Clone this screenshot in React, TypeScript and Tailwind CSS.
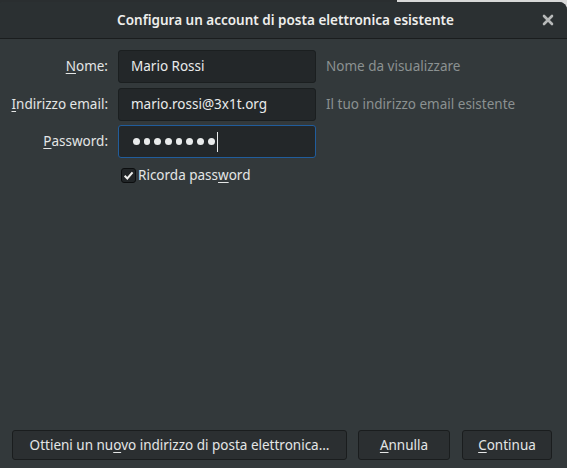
import React from "react";

const font = { fontFamily: '"Noto Sans", "Open Sans", sans-serif' };

function U({ children }: { children: React.ReactNode }) {
  return <span className="underline underline-offset-2 decoration-1">{children}</span>;
}

function Field({ label, value, hint, focused }: { label: React.ReactNode; value: React.ReactNode; hint?: string; focused?: boolean }) {
  return (
    <div className="flex items-center h-[33px] whitespace-nowrap">
      <div className="w-[118px] shrink-0 text-right pr-[10px] text-[#e4e6e6] text-[13.5px]">{label}</div>
      <div
        className={
          "w-[198px] shrink-0 h-full rounded-[3px] bg-[#232729] flex items-center pl-[12px] text-[13.5px] text-[#e9ebeb] border " +
          (focused ? "border-[#215d9c]" : "border-[#1b1f20]")
        }
      >
        {value}
      </div>
      {hint && <div className="ml-[10px] shrink-0 text-[13.5px] text-[#8b9191]">{hint}</div>}
    </div>
  );
}

function Btn({ w, children }: { w: string; children: React.ReactNode }) {
  return (
    <div className={w + " shrink-0 h-full rounded-[3px] bg-[#2b2f31] border border-[#1a1d1e] flex items-center justify-center whitespace-nowrap"}>
      <span>{children}</span>
    </div>
  );
}

export default function App() {
  const dots = [0, 1, 2, 3, 4, 5, 6, 7];
  return (
    <div
      className="w-[567px] h-[468px] bg-[linear-gradient(to_right,#2a2e30_397px,#d8d8d8_397px)] pt-[2px]"
      style={font}
    >
      <div className="w-full h-[466px] flex flex-col rounded-tr-[8px] rounded-tl-[4px] overflow-hidden bg-[#33393b]">
        <div className="h-[37px] shrink-0 bg-[#2b3032] border-b border-[#1a1d1e] flex items-center relative">
          <div className="flex-1 text-center text-[13.5px] font-semibold text-[#eeeeec] pl-[4px] pt-[1px] whitespace-nowrap">
            Configura un account di posta elettronica esistente
          </div>
          <div className="absolute right-[12px] top-[11px] text-[#b7b9b9]">
            <svg width="14" height="14" viewBox="0 0 14 14">
              <path d="M3 3 L11 11 M11 3 L3 11" stroke="currentColor" strokeWidth="2.6" strokeLinecap="round" />
            </svg>
          </div>
        </div>
        <div className="flex-1 flex flex-col pt-[11px]">
          <div className="flex flex-col gap-[5px]">
            <Field label={<><U>N</U>ome:</>} value="Mario Rossi" hint="Nome da visualizzare" />
            <Field label={<><U>I</U>ndirizzo email:</>} value="mario.rossi@3x1t.org" hint="Il tuo indirizzo email esistente" />
            <div className="-mt-[1px]">
              <Field
                label={<><U>P</U>assword:</>}
                focused
                value={
                  <span className="flex items-center pl-[2px]">
                    <span className="flex items-center gap-[4px]">
                      {dots.map((d) => (
                        <span key={d} className="w-[6.7px] h-[6.7px] rounded-full bg-[#e9ebeb]" />
                      ))}
                    </span>
                    <span className="w-[1px] h-[20px] bg-[#e9ebeb] ml-[2px]" />
                  </span>
                }
              />
            </div>
          </div>
          <div className="flex items-center mt-[9px] ml-[121px] h-[16px]">
            <div className="w-[15px] h-[15px] shrink-0 rounded-[3px] bg-[#212527] border border-[#0c0e0f] flex items-center justify-center">
              <svg width="11" height="11" viewBox="0 0 12 12">
                <path d="M1.8 6.3 L4.7 9.2 L10.4 2.6" stroke="#eeeeec" strokeWidth="2.2" fill="none" />
              </svg>
            </div>
            <span className="ml-[2px] text-[13.5px] text-[#e4e6e6] whitespace-nowrap">
              Ricorda pass<U>w</U>ord
            </span>
          </div>
          <div className="flex-1" />
          <div className="flex items-center h-[30px] mb-[8px] pl-[12px] text-[13.5px] text-[#e4e6e6]">
            <Btn w="w-[335px]">
              Ottieni un nu<U>o</U>vo indirizzo di posta elettronica…
            </Btn>
            <div className="w-[11px] shrink-0" />
            <Btn w="w-[92px]">
              <U>A</U>nnulla
            </Btn>
            <div className="w-[12px] shrink-0" />
            <Btn w="w-[90px]">
              <U>C</U>ontinua
            </Btn>
          </div>
        </div>
      </div>
    </div>
  );
}
